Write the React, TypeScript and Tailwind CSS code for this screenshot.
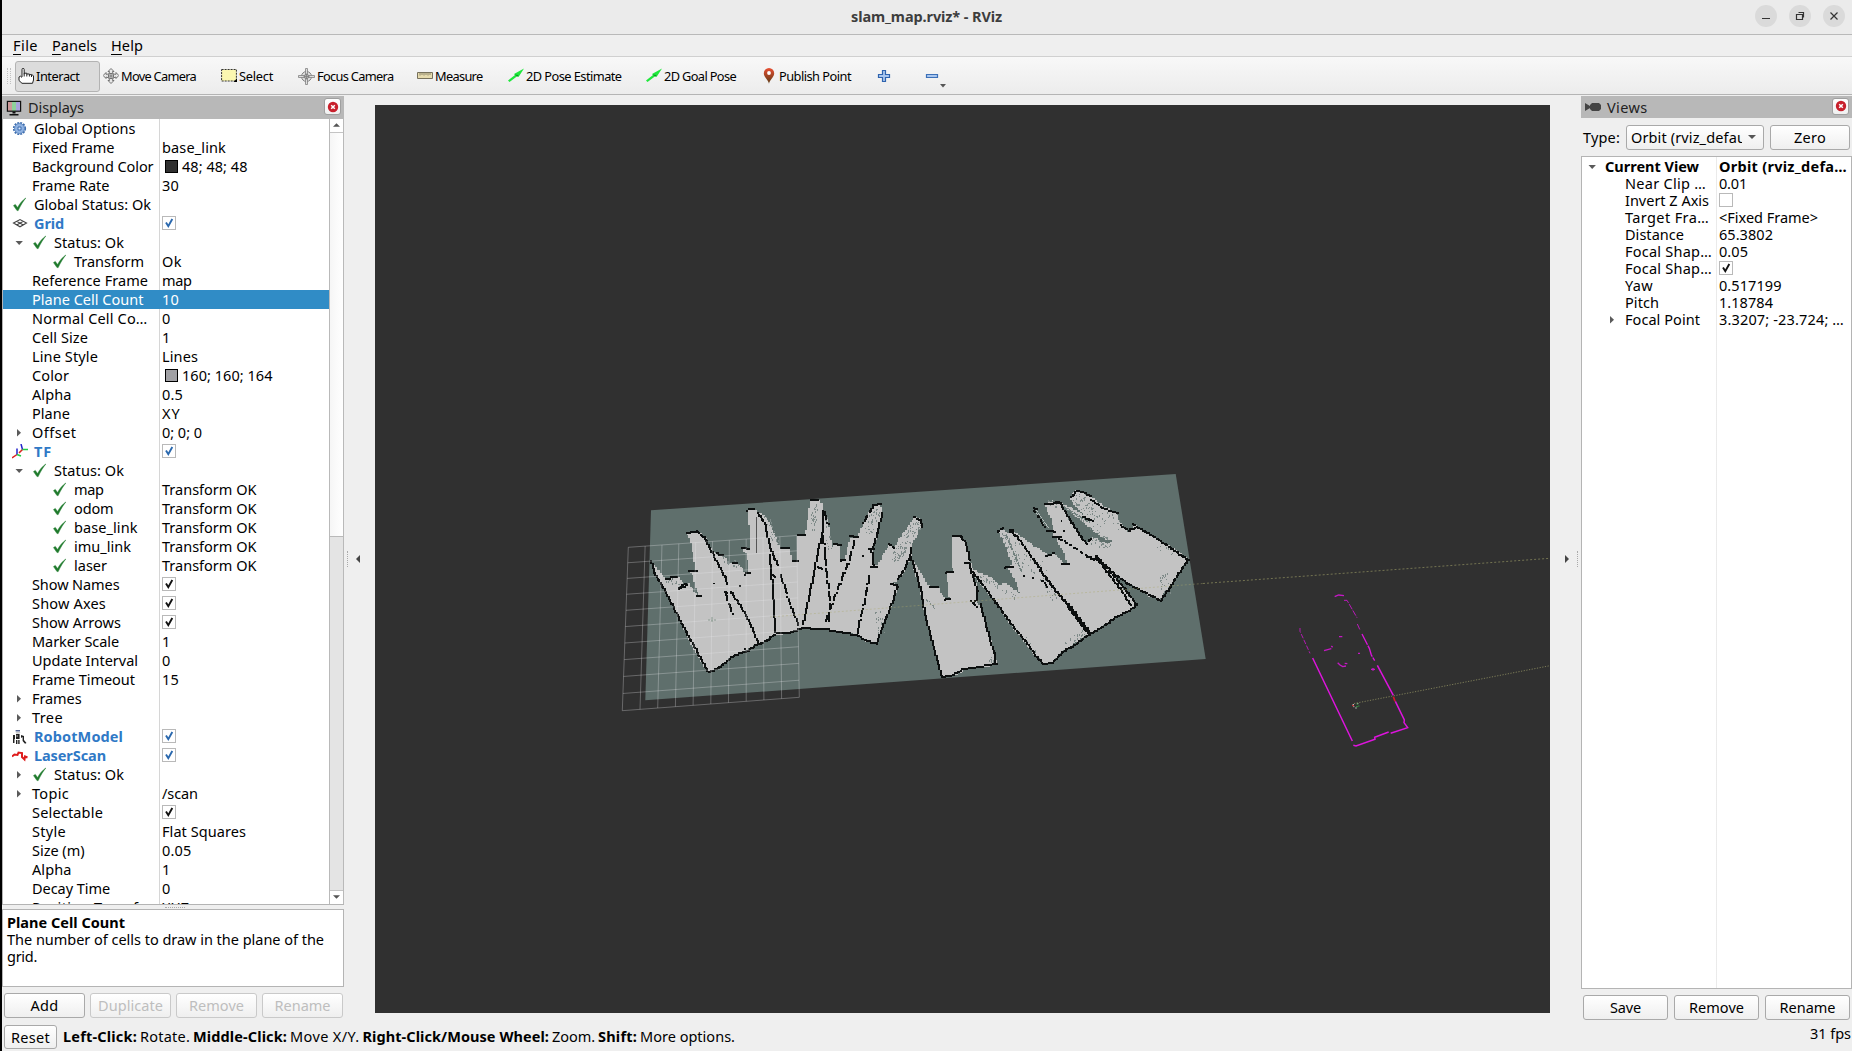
import { useLayoutEffect, useRef, useState } from "react";
import type { ReactNode } from "react";
import { clsx } from "clsx";

/* ---------- text with a fixed advance width ---------- */

function Fit({ w, className, children }: { w: number; className?: string; children: ReactNode }) {
  const ref = useRef<HTMLSpanElement>(null);
  const [spacing, setSpacing] = useState<number | null>(null);
  useLayoutEffect(() => {
    const el = ref.current;
    if (!el || spacing !== null) return;
    const n = (el.textContent ?? "").length;
    setSpacing((w + 1 - el.getBoundingClientRect().width) / Math.max(n, 1));
  }, [w, spacing]);
  return (
    <span ref={ref} className={clsx("inline-block shrink-0 whitespace-pre", className)} style={{ letterSpacing: spacing ?? 0 }}>
      {children}
    </span>
  );
}

/* ---------- small icons ---------- */

const Tick = () => (
  <svg viewBox="0 0 16 16" className="size-4 shrink-0">
    <path d="M1.5 8.6 3.3 7.4 5.6 10.6C7.6 6.6 10.4 3.4 13.8 1 11 4.6 8.4 8.6 6.2 13.6L5 13.6Z" fill="#1f7a2c" stroke="#1f7a2c" strokeWidth=".5" />
  </svg>
);
const ArrowDown = () => (
  <svg viewBox="0 0 16 16" className="size-4 shrink-0"><path d="M3.5 6h7.4L7.2 10z" fill="#5a5a5a" /></svg>
);
const ArrowRight = () => (
  <svg viewBox="0 0 16 16" className="size-4 shrink-0"><path d="M5 4v7.4L9 7.7z" fill="#5a5a5a" /></svg>
);
const GearIcon = () => (
  <svg viewBox="0 0 16 16" className="size-4 shrink-0">
    <circle cx="7.5" cy="7.5" r="5.8" fill="none" stroke="#3f6fb0" strokeWidth="1.6" strokeDasharray="2 1.04" />
    <circle cx="7.5" cy="7.5" r="5" fill="#8fb2e2" stroke="#4876b4" strokeWidth=".8" />
    <path d="M6 6h3v3H6z" fill="#b9d0f0" stroke="#3f6fb0" strokeWidth="1" />
    <circle cx="7.5" cy="7.5" r=".8" fill="#dbe8fa" />
  </svg>
);
const GridIcon = () => (
  <svg viewBox="0 0 16 16" className="size-4 shrink-0" fill="none" stroke="#444" strokeWidth="1.1">
    <path d="M1.5 7 8 3.6 14.5 7 8 10.8ZM4.7 5.3 11.3 9M11.3 5.3 4.7 9" />
  </svg>
);
const TfIcon = () => (
  <svg viewBox="0 0 16 16" className="size-4 shrink-0" fill="none" strokeWidth="1.5">
    <path d="M7 8.600 10.500 5.600" stroke="#e6c832" strokeWidth="1" />
    <path d="M5 10.500 0 14M10.500 5.500 7 9" stroke="#d22" />
    <path d="M5 10.500V4.500M10.500 5.500 9 0" stroke="#22c" />
    <path d="M5 10.500 9 12M10.500 5.500H16" stroke="#2c4" />
  </svg>
);
const RobotIcon = () => (
  <svg viewBox="0 0 16 16" className="size-4 shrink-0">
    <path d="M3.600 1.200h4.400v1.200H3.600z" fill="#2b3f78" /><path d="M3.500 3.200h5l-1 1.400h-3z" fill="#bbb" />
    <path d="M1 6h2v8H1zM4 5h3.600v5H4zM4 11h1.400v4H4zM6.200 11h1.400v4H6.200zM9 6l3 1v4l2.500 3-1.500.8L10.600 12V8L9 9z" fill="#222" />
    <path d="M4.600 6h1v2h-1zM2 10h1v4H2z" fill="#999" />
  </svg>
);
const LaserIcon = () => (
  <svg viewBox="0 0 16 16" className="size-4 shrink-0" fill="none" stroke="#de1b1b" strokeWidth="2">
    <path d="M0 8.500 2.500 6.500 5.500 7 6.500 4.500 10 5V9L12.500 11.500 13 8.500 15.500 9.500" />
  </svg>
);

type IconName = "gear" | "tick" | "grid" | "tf" | "robot" | "laser";
const icons: Record<IconName, () => ReactNode> = { gear: GearIcon, tick: Tick, grid: GridIcon, tf: TfIcon, robot: RobotIcon, laser: LaserIcon };

function Check({ on, blue }: { on: boolean; blue?: boolean }) {
  return (
    <span className="mb-px flex size-[14px] shrink-0 items-center justify-center border border-[#b9b9b9] bg-white">
      {on && (
        <svg viewBox="0 0 12 12" className="size-3" fill="none" stroke={blue ? "#2a68ae" : "#111"} strokeWidth="1.9">
          <path d="M3 5.500 5.300 9.200 9.300 2" />
        </svg>
      )}
    </span>
  );
}

/* ---------- displays tree ---------- */

type Row = {
  t: string; w: number; v?: string; vw?: number;
  level?: 0 | 1 | 2; icon?: IconName; arrow?: "d" | "r"; head?: boolean;
  check?: "blue" | "black"; color?: string;
};

const displayRows: Row[] = [
  { t: "Global Options", w: 100.5, level: 0, icon: "gear" },
  { t: "Fixed Frame", w: 81.5, v: "base_link", vw: 63 },
  { t: "Background Color", w: 120.5, v: "48; 48; 48", vw: 64.5, color: "bg-[#303030]" },
  { t: "Frame Rate", w: 76.5, v: "30", vw: 16 },
  { t: "Global Status: Ok", w: 116, level: 0, icon: "tick" },
  { t: "Grid", w: 29, level: 0, icon: "grid", head: true, check: "blue" },
  { t: "Status: Ok", w: 69, level: 1, arrow: "d" },
  { t: "Transform", w: 69, level: 2, v: "Ok", vw: 19 },
  { t: "Reference Frame", w: 115, v: "map", vw: 28.5 },
  { t: "Plane Cell Count", w: 110.5, v: "10", vw: 16 },
  { t: "Normal Cell Co…", w: 114.5, v: "0", vw: 8 },
  { t: "Cell Size", w: 55, v: "1", vw: 8 },
  { t: "Line Style", w: 65, v: "Lines", vw: 35 },
  { t: "Color", w: 36, v: "160; 160; 164", vw: 89.5, color: "bg-[#a0a0a4]" },
  { t: "Alpha", w: 38.5, v: "0.5", vw: 20 },
  { t: "Plane", w: 37, v: "XY", vw: 17.5 },
  { t: "Offset", w: 43.5, arrow: "r", v: "0; 0; 0", vw: 39 },
  { t: "TF", w: 17, level: 0, icon: "tf", head: true, check: "blue" },
  { t: "Status: Ok", w: 69, level: 1, arrow: "d" },
  { t: "map", w: 28.5, level: 2, v: "Transform OK", vw: 93.5 },
  { t: "odom", w: 38.5, level: 2, v: "Transform OK", vw: 93.5 },
  { t: "base_link", w: 62.5, level: 2, v: "Transform OK", vw: 93.5 },
  { t: "imu_link", w: 56, level: 2, v: "Transform OK", vw: 93.5 },
  { t: "laser", w: 32, level: 2, v: "Transform OK", vw: 93.5 },
  { t: "Show Names", w: 86.5, check: "black" },
  { t: "Show Axes", w: 73, check: "black" },
  { t: "Show Arrows", w: 88, check: "black" },
  { t: "Marker Scale", w: 86, v: "1", vw: 8 },
  { t: "Update Interval", w: 105, v: "0", vw: 8 },
  { t: "Frame Timeout", w: 102, v: "15", vw: 16 },
  { t: "Frames", w: 48.5, arrow: "r" },
  { t: "Tree", w: 30, arrow: "r" },
  { t: "RobotModel", w: 88, level: 0, icon: "robot", head: true, check: "blue" },
  { t: "LaserScan", w: 71, level: 0, icon: "laser", head: true, check: "blue" },
  { t: "Status: Ok", w: 69, level: 1, arrow: "r" },
  { t: "Topic", w: 36, arrow: "r", v: "/scan", vw: 35 },
  { t: "Selectable", w: 70, check: "black" },
  { t: "Style", w: 33, v: "Flat Squares", vw: 83 },
  { t: "Size (m)", w: 51.5, v: "0.05", vw: 28.5 },
  { t: "Alpha", w: 38.5, v: "1", vw: 8 },
  { t: "Decay Time", w: 77, v: "0", vw: 8 },
  { t: "Position Transf…", w: 117, v: "XYZ", vw: 27 },
];

function DisplayRow({ r, selected }: { r: Row; selected: boolean }) {
  const Icon = r.icon ? icons[r.icon] : null;
  return (
    <div className={clsx("flex h-[19px] shrink-0 items-center", selected && "bg-[#308cc6] text-white")}>
      <div className={clsx("flex h-full w-[157px] shrink-0 items-center border-r pl-[9px]", selected ? "border-[#308cc6]" : "border-[#d6d6d6]")}>
        <span className="flex w-4 shrink-0">
          {Icon && <Icon />}
          {r.arrow === "d" && <ArrowDown />}
          {r.arrow === "r" && <ArrowRight />}
        </span>
        {(r.level === 1 || r.level === 2) && (
          <span className={clsx("flex shrink-0", r.level === 1 ? "ml-1" : "ml-6")}><Tick /></span>
        )}
        <Fit w={r.w} className={clsx(r.level === undefined ? "ml-1" : "ml-1.5", r.head && "font-bold text-[#3079c6]")}>{r.t}</Fit>
      </div>
      <div className="flex items-center pl-[2px]">
        {r.color && <span className={clsx("mr-1 ml-[3px] size-[13px] border border-black", r.color)} />}
        {r.check && <Check on blue={r.check === "blue"} />}
        {r.v && <Fit w={r.vw ?? 0}>{r.v}</Fit>}
      </div>
    </div>
  );
}

/* ---------- shared chrome ---------- */

function Button({ label, w, className, disabled }: { label: string; w: number; className: string; disabled?: boolean }) {
  return (
    <button className={clsx("flex items-center justify-center rounded-[3px] border bg-linear-to-b from-white to-[#efefef]", disabled ? "border-[#c9c9c9] text-[#bebebe]" : "border-[#a9a9a9] text-black", className)}>
      <Fit w={w}>{label}</Fit>
    </button>
  );
}

const CloseButton = () => (
  <span className="mb-0.5 flex size-[17px] items-center justify-center rounded-[3px] border border-[#a0a0a0] bg-linear-to-b from-white to-[#f0f0f0]">
    <svg viewBox="0 0 12 12" className="size-3">
      <circle cx="6" cy="6" r="5.200" fill="#c8202c" />
      <path d="M4.200 4.200l3.600 3.600M7.800 4.200l-3.600 3.600" stroke="#fff" strokeWidth="1.500" />
    </svg>
  </span>
);

/* ---------- toolbar icons ---------- */

const HandIcon = () => (
  <svg viewBox="0 0 16 16" className="size-4" fill="#fff" stroke="#222" strokeWidth="1" strokeLinejoin="round">
    <path d="M4 9V1.500a1 1 0 0 1 2.200 0V6.500V5.200h2.600V6h2.600v.6h2.400l1.700 1.200V12l-1 3.300H4L1 12.500V9l1.500-.8L4 9.500M6.200 6.500v2M8.800 6v2.500M11.400 6.500v2M13.500 7v2" />
  </svg>
);
const MoveIcon = () => (
  <svg viewBox="0 0 16 16" className="size-4" fill="#e8e8e8" stroke="#666" strokeWidth=".9">
    <path d="M8 .5 11 3.500H9.500L10 6 13 6.300V4.500L15.800 7.500 13 10.500V9L10 10 9.500 12.500H11L8 15.500 5 12.500H6.500L6 10 3 9V10.500L.2 7.500 3 4.500V6.300L6 6 6.500 3.500H5Z" />
    <circle cx="8" cy="8" r="2.700" />
    <path d="M8 5.300v5.400M5.300 8h5.400" />
  </svg>
);
const SelectIcon = () => (
  <svg viewBox="0 0 16 16" className="size-4">
    <path d="M.6 1.500h14.800v11.500H.6z" fill="#fbf7b0" stroke="#333" strokeWidth="1" strokeDasharray="2 1" />
    <path d="M12.500 14l3.500-3.500v3.500z" fill="#000" />
  </svg>
);
const FocusIcon = () => (
  <svg viewBox="0 0 17 17" className="size-[17px]" fill="none" stroke="#808080" strokeWidth="1">
    <circle cx="8.500" cy="8.500" r="5" fill="#e2e2e2" /><circle cx="8.500" cy="8.500" r="2.200" fill="#bbb" />
    <path d="M7.500 .5h2v5.500h-2zM7.500 11h2v5.500h-2zM.5 7.500h5.500v2H.5zM11 7.500h5.500v2H11z" fill="#ddd" strokeWidth=".8" />
    <path d="M8.500 6v5M6 8.500h5" strokeWidth=".8" />
  </svg>
);
const RulerIcon = () => (
  <svg viewBox="0 0 16 16" className="size-4">
    <path d="M.5 4.500h15v6H.5z" fill="#e6dbae" stroke="#77715c" />
    <path d="M3 5v2.500M5 5v2M7 5v2.500M9 5v2M11 5v2.500M13 5v2" stroke="#77715c" strokeWidth=".8" />
  </svg>
);
const PoseIcon = () => (
  <svg viewBox="0 0 16 16" className="size-4">
    <path d="M0 12.500 7 7 6 6 16 .5 10.500 9 9.500 8 1.500 14z" fill="#1fe83c" /><path d="M6.500 6.500 9.600 8.800 10.500 7z" fill="#0a9a20" />
  </svg>
);
const PinIcon = () => (
  <svg viewBox="0 0 16 16" className="size-4">
    <defs><linearGradient id="pin" x1="0" y1="0" x2="0" y2="1"><stop offset="0" stopColor="#e84f33" /><stop offset="1" stopColor="#5a3a14" /></linearGradient></defs>
    <path d="M8 15.800C7.300 11.500 2.800 9.500 2.800 5.300a5.200 5.200 0 0 1 10.400 0C13.200 9.500 8.700 11.500 8 15.800z" fill="url(#pin)" /><circle cx="8" cy="5" r="1.900" fill="#fff" />
  </svg>
);
const PlusIcon = () => (
  <svg viewBox="0 0 16 16" className="size-4"><path d="M6.500 2.500h3v4h4v3h-4v4h-3v-4h-4v-3h4z" fill="#a9c6ee" stroke="#2e63ae" strokeWidth="1.200" /></svg>
);
const MinusIcon = () => (
  <svg viewBox="0 0 16 16" className="size-4"><path d="M2.500 6.500h11v3h-11z" fill="#a9c6ee" stroke="#3c70b8" strokeWidth="1.200" /></svg>
);

const tools = [
  { label: "Interact", w: 42.5, icon: <HandIcon />, box: "w-[85px] rounded-[3px] border border-[#b3b3b3] bg-[#dcdcdc] pl-0.5" },
  { label: "Move Camera", w: 74, icon: <MoveIcon />, box: "w-[118px] pl-[3px]" },
  { label: "Select", w: 33, icon: <SelectIcon />, box: "w-[77px] pl-[3px]" },
  { label: "Focus Camera", w: 75.5, icon: <FocusIcon />, box: "w-[119px] pl-[3px]" },
  { label: "Measure", w: 46.5, icon: <RulerIcon />, box: "w-[91px] pl-[3px]" },
  { label: "2D Pose Estimate", w: 94.5, icon: <PoseIcon />, box: "w-[138px] pl-[3px]" },
  { label: "2D Goal Pose", w: 71, icon: <PoseIcon />, box: "w-[115px] pl-[3px]" },
  { label: "Publish Point", w: 71, icon: <PinIcon />, box: "w-[115px] pl-[3px]" },
];

/* ---------- 3D scene ---------- */

type P = [number, number];
const CELL = 5;
const snap = (n: number) => Math.round(n / CELL) * CELL;
const pts = (s: string): P[] => s.split(" ").map((p) => p.split(",").map(Number) as P);

/* Outline that walks from point to point in whole map cells. */
function stair(s: string) {
  const a = pts(s);
  let d = `M${snap(a[0][0])} ${snap(a[0][1])}`;
  for (let i = 0; i < a.length; i++) {
    const [x0, y0] = a[i];
    const [x1, y1] = a[(i + 1) % a.length];
    const n = Math.max(1, Math.ceil(Math.hypot(x1 - x0, y1 - y0) / CELL));
    for (let k = 1; k <= n; k++) d += `H${snap(x0 + ((x1 - x0) * k) / n)}V${snap(y0 + ((y1 - y0) * k) / n)}`;
  }
  return d + "Z";
}

/* Row of occupied cells along a polyline. */
function cells(s: string, size = 6, skip = 0) {
  const a = pts(s);
  let d = "";
  let q = 0;
  for (let i = 0; i + 1 < a.length; i++) {
    const [x0, y0] = a[i];
    const [x1, y1] = a[i + 1];
    const n = Math.max(1, Math.ceil(Math.hypot(x1 - x0, y1 - y0) / 4));
    for (let k = 0; k <= n; k++) {
      q++;
      if (skip && q % skip < 2) continue;
      const x = Math.round((x0 + ((x1 - x0) * k) / n) / 4) * 4;
      const y = Math.round((y0 + ((y1 - y0) * k) / n) / 4) * 4;
      d += `M${x - size / 2} ${y - size / 2}h${size}v${size}h${-size}z`;
    }
  }
  return d;
}

/* Unknown cells scattered around a segment. */
function speckle(x0: number, y0: number, x1: number, y1: number, spread: number, count: number, seed: number) {
  let s = seed * 7919;
  const rnd = () => ((s = (s * 16807) % 2147483647) / 2147483647);
  const len = Math.hypot(x1 - x0, y1 - y0);
  let d = "";
  for (let i = 0; i < count; i++) {
    const t = rnd();
    const o = (rnd() - 0.5) * spread;
    const x = Math.round((x0 + (x1 - x0) * t - ((y1 - y0) / len) * o) / 3) * 3;
    const y = Math.round((y0 + (y1 - y0) * t + ((x1 - x0) / len) * o) / 3) * 3;
    d += `M${x} ${y}h3v${rnd() > 0.6 ? 6 : 3}h-3z`;
  }
  return d;
}

const leftFree = "122,305 148,335 165,355 185,358 205,352 222,375 235,372 250,390 262,408 268,405 258,385 248,345 238,335 258,330 250,290 243,250 236,225 232,220 258,213 285,232 305,275 325,285 345,292 355,312 380,308 395,325 405,340 415,338 412,290 400,265 420,265 417,180 412,150 432,146 445,160 465,165 485,205 500,240 512,265 535,262 545,300 562,300 562,225 585,225 592,180 600,120 622,118 638,135 640,165 655,180 660,220 665,260 672,255 690,252 688,300 705,300 712,260 720,235 742,228 760,190 785,138 810,133 818,160 808,185 800,235 790,265 785,315 800,318 815,290 835,255 852,262 880,215 912,170 930,178 938,195 925,220 905,260 903,290 885,335 870,355 850,370 865,380 850,420 820,500 800,550 775,545 730,522 655,510 575,505 530,522 495,525 470,545 440,555 400,575 365,590 330,620 298,637 270,600 240,545 210,480 180,420 155,370 135,335";
const leftWalls = [
  "125,305 132,335 155,375 185,430 215,490 245,545 275,600 295,635 320,628 350,605 370,588 415,572 440,555 470,543 495,522 535,520 575,505 650,508 700,518 740,525 770,542 800,550 803,540",
  "862,378 850,420 830,470 805,535", "905,265 900,290 880,335 865,355", "845,372 862,378",
  "258,213 285,235 310,285 345,350 352,372", "362,395 400,450 425,500 445,550", "445,160 465,190 475,240 483,270 503,315",
  "478,285 485,340 490,420 497,515", "638,150 640,210 625,270 612,340 595,420 580,490", "817,160 807,200 797,240 785,270 790,315",
  "232,220 258,214", "412,150 432,148", "602,120 622,120", "788,135 810,133", "912,172 932,180 937,200", "235,332 258,330",
  "397,262 415,268", "512,263 535,265", "547,302 562,302", "562,225 585,225", "672,252 690,256", "690,302 703,300", "720,228 742,232",
  "168,355 200,352", "206,386 232,376", "208,382 226,372", "258,408 270,408", "785,320 800,320", "835,250 852,262", "366,308 380,308",
  "404,342 420,338", "318,280 340,284", "622,318 634,326", "482,340 496,350", "776,268 792,268", "343,396 352,400",
];
const leftBroken = [
  "345,395 368,460", "510,340 540,430 565,495", "640,225 645,290 655,380 660,430 655,490", "735,240 715,310 690,370 665,435 645,490",
  "778,345 765,420 750,480 742,520", "640,150 655,190", "758,190 788,140",
];
const rightFree = [
  "62,290 85,325 105,365 118,380 145,378 150,400 172,420 178,415 175,375 168,338 188,335 185,280 187,230 205,228 225,240 235,270 242,310 250,345 262,390 262,430 275,440 290,500 305,550 318,605 318,615 270,622 230,628 200,645 155,652 145,610 125,540 105,460 90,390 75,340",
  "245,325 270,340 300,350 325,375 345,368 370,390 390,400 380,370 360,330 348,320 368,315 355,280 340,240 325,212 338,205 350,220 372,215 400,235 440,265 475,285 490,280 510,300 530,315 525,285 505,245 490,225 492,212 485,180 470,145 465,130 485,122 510,130 530,165 545,195 570,225 590,250 605,275 640,310 680,360 710,400 738,435 720,455 680,470 645,495 610,520 590,525 555,550 520,575 490,605 465,613 430,580 400,540 360,490 320,430 280,380 250,345",
  "540,110 555,90 600,108 640,140 680,160 690,190 710,215 730,205 730,195 800,235 850,265 895,300 870,335 850,370 825,400 812,420 780,410 720,370 670,345 640,315 615,285 595,265 590,245 605,232 650,250 665,242 630,210 600,180 570,150 550,130",
  "515,132 540,142 600,180 668,240 650,242 590,195",
];
const rightWalls = [
  "62,290 80,345 95,400 105,460 125,540 145,610 155,652 190,645 220,628 270,620 318,612 315,580", "240,315 248,350 262,390 258,420 250,430",
  "270,430 285,480 300,540 315,585", "187,228 210,228 228,248 235,280 238,300", "118,380 145,378", "168,338 188,337", "165,418 178,415",
  "222,308 240,310", "248,335 290,390 330,445 370,500 410,548 440,590 462,613 490,605 520,575 555,555 600,522 640,500 680,470 720,452 740,435",
  "510,130 540,180 580,240 590,250", "465,132 510,128", "470,210 495,215", "515,312 535,312", "345,322 368,318", "468,288 490,280",
  "322,215 338,205", "430,145 440,147", "595,243 605,235", "545,112 562,90 605,108", "605,120 640,145 682,160", "690,195 715,212 735,205",
  "728,192 800,235 895,300 870,335 845,375 812,422 780,405 720,375 670,340 625,295", "245,425 258,438", "486,232 512,232", "592,290 618,298",
  "362,212 385,235 410,270 450,325", "580,172 608,182", "645,328 690,385 722,435", "655,330 700,380 738,432",
];
const rightBroken = ["505,235 540,255 610,300", "455,360 472,380", "432,148 450,180 470,210"];

const specks = [
  speckle(612, 130, 606, 210, 22, 28, 11), speckle(798, 145, 775, 220, 28, 40, 22), speckle(925, 185, 850, 300, 30, 90, 33),
  speckle(470, 165, 500, 255, 20, 26, 44), speckle(330, 290, 385, 315, 22, 20, 55), speckle(805, 450, 815, 520, 26, 20, 66),
  speckle(645, 170, 660, 270, 14, 14, 77), speckle(170, 358, 225, 380, 12, 12, 88),
];
const specksRight = [
  speckle(555, 105, 640, 190, 32, 60, 12), speckle(640, 150, 690, 200, 24, 12, 13), speckle(335, 215, 395, 325, 24, 36, 14),
  speckle(265, 345, 375, 410, 16, 36, 15), speckle(595, 240, 660, 258, 20, 24, 16), speckle(815, 340, 830, 400, 30, 28, 17),
  speckle(520, 550, 580, 515, 18, 20, 18), speckle(470, 125, 500, 135, 14, 10, 19), speckle(525, 140, 650, 235, 10, 30, 20),
  speckle(450, 350, 510, 440, 30, 16, 21), speckle(300, 595, 312, 608, 12, 8, 23), speckle(400, 530, 440, 570, 20, 8, 24),
  speckle(780, 250, 860, 280, 24, 8, 25), speckle(370, 240, 480, 370, 50, 22, 26), speckle(105, 410, 135, 445, 4, 8, 27),
];

function gridLines() {
  const tl: P = [628.3, 547.3], tr: P = [796.7, 535.5], bl: P = [622.3, 710.7], br: P = [799.3, 697.3];
  const mix = (a: P, b: P, t: number): P => [a[0] + (b[0] - a[0]) * t, a[1] + (b[1] - a[1]) * t];
  let d = "";
  for (let i = 0; i <= 10; i++) {
    const u = i / 10;
    const v = u * (0.94 + 0.06 * u);
    d += `M${mix(tl, tr, u).join(" ")}L${mix(bl, br, u).join(" ")}`;
    d += `M${mix(tl, bl, v).join(" ")}L${mix(tr, br, v).join(" ")}`;
  }
  return d;
}

function Scene() {
  return (
    <svg viewBox="375 105 1175 908" className="block h-[908px] w-[1175px] bg-[#303030]">
      <path d="M651 510.300 1175.700 474 1205.700 659 645.300 700.300Z" fill="#5f6f6c" />
      <g transform="translate(610 460) scale(.33333)" shapeRendering="crispEdges">
        <path d={stair(leftFree)} fill="#c3c3c3" />
        <path d={specks.join("")} fill="#7f8b89" />
        <path d="M440 170V280" stroke="#555" strokeWidth="3" />
        <path d={leftWalls.map((s) => cells(s)).join("")} fill="#0c0f0f" />
        <path d={leftBroken.map((s) => cells(s, 6, 9)).join("")} fill="#0c0f0f" />
        <path d="M308 368h6v5h-6zM387 375h6v5h-6zM402 565h6v5h-6zM756 285h5v6h-5zM366 458h6v6h-6z" fill="#0c0f0f" />
      </g>
      <g transform="translate(890 460) scale(.33333)" shapeRendering="crispEdges">
        <path d={rightFree.map((s) => stair(s)).join("")} fill="#c3c3c3" />
        <path d="M434 150 470 208M440 150 476 205" stroke="#b8bebd" strokeWidth="3" strokeDasharray="8 3" />
        <path d={specksRight.join("")} fill="#7f8b89" />
        <path d="M348 225 395 335M520 140 600 188" stroke="#71807d" strokeWidth="5" strokeDasharray="14 4" />
        <path d={rightWalls.map((s) => cells(s)).join("")} fill="#0c0f0f" />
        <path d={cells("450,330 500,395 535,436", 7)} fill="#0c0f0f" />
        <path d={cells("535,436 595,516", 11)} fill="#0c0f0f" />
        <path d={cells("618,288 645,325", 8)} fill="#0c0f0f" />
        <path d={rightBroken.map((s) => cells(s, 6, 5)).join("")} fill="#0c0f0f" />
        <path d="M358 208h14v12h-14zM495 122h14v10h-14zM512 180h5v5h-5zM520 210h5v5h-5zM426 350h6v6h-6zM400 346h5v6h-5z" fill="#0c0f0f" />
      </g>
      <path d={gridLines()} fill="none" stroke="#e8e8ea" strokeOpacity=".3" strokeWidth="1" />
      <path d="M708 620h8M712 617v5" stroke="#8a9a90" strokeWidth="1" strokeDasharray="2 1" />
      <path d="M770 617 1203 583.500" stroke="#a9a76c" strokeOpacity=".4" strokeWidth="1" strokeDasharray="2 2" />
      <path d="M1203 583.500 1550 558.300" stroke="#85855a" strokeOpacity=".8" strokeWidth="1" strokeDasharray="2 2" />
      <path d="M1354 703.500 1550 665.700" stroke="#85855c" strokeOpacity=".9" strokeWidth="1" strokeDasharray="1.200 1.500" />
      <g transform="translate(1270 540) scale(.33333)" fill="none" stroke="#dd14dd">
        <path d="M128 354 247 603M322 376 370 466" strokeWidth="4.500" />
        <path d="M376 484 403 540 402 548 413 563 362 580M250 616 258 618 315 598 314 592 356 576" strokeWidth="4.500" />
        <path d="M276 282 298 325 304 345 314 362" strokeWidth="4" strokeDasharray="36 3" />
        <path d="M90 264v10l30 66" strokeWidth="3" strokeDasharray="14 5" opacity=".75" />
        <path d="M222 181h9l30 52M262 252 270 270" strokeWidth="3" strokeDasharray="18 4" opacity=".8" />
        <path d="M194 170 206 165 222 167M162 332 184 326M184 318l4 4M207 290h10M264 340h6M203 368 210 375 218 380 228 378M224 370l8 1M303 388h12M309 384v8" strokeWidth="4" opacity=".85" />
        <path d="M370 470 375 484" stroke="#d81a2a" strokeWidth="5" />
        <path d="M248 494h4M256 504h4M250 500h3M262 491h3" stroke="#ddd" strokeWidth="3" />
        <path d="M260 492h3M259 500h4M265 498h3" stroke="#35c048" strokeWidth="3" />
        <path d="M246 497h6" stroke="#d33" strokeWidth="3" />
      </g>
    </svg>
  );
}

/* ---------- views panel ---------- */

const viewRows = [
  { t: "Near Clip …", w: 80, v: "0.01", vw: 27 },
  { t: "Invert Z Axis", w: 83, box: false },
  { t: "Target Fra…", w: 83, v: "<Fixed Frame>", vw: 98 },
  { t: "Distance", w: 58, v: "65.3802", vw: 53 },
  { t: "Focal Shap…", w: 86, v: "0.05", vw: 28 },
  { t: "Focal Shap…", w: 86, box: true },
  { t: "Yaw", w: 27, v: "0.517199", vw: 61.5 },
  { t: "Pitch", w: 33, v: "1.18784", vw: 53 },
  { t: "Focal Point", w: 74, v: "3.3207; -23.724; …", vw: 124, arrow: true },
];

const menus = [
  { t: "File", w: 24, m: "ml-px" },
  { t: "Panels", w: 44, m: "ml-[14px]" },
  { t: "Help", w: 31, m: "ml-[14px]" },
];

const hints = [
  { b: "Left-Click:", bw: 73, t: "Rotate.", tw: 49 },
  { b: "Middle-Click:", bw: 93, t: "Move X/Y.", tw: 68.5 },
  { b: "Right-Click/Mouse Wheel:", bw: 185.5, t: "Zoom.", tw: 42 },
  { b: "Shift:", bw: 38, t: "More options.", tw: 94 },
];

export default function App() {
  return (
    <div className="flex h-[1051px] w-[1852px] flex-col overflow-hidden border-l-2 border-black bg-[#efefef] font-['Noto_Sans',sans-serif] text-[14.5px] leading-[19px] text-black">
      <header className="flex h-[35px] shrink-0 items-center border-b border-[#b9b9b9] bg-[#ebebeb]">
        <div className="w-[1753px] pb-0.5 pl-[849px] font-bold text-[#3d3d3d]">
          <Fit w={150}>slam_map.rviz* - RViz</Fit>
        </div>
        <div className="flex gap-3 pb-0.5">
          {["M7 13.500h8", "M7.500 9.500h6v5h-6zM9.500 7.500h5v5", "M7.500 7.500l7 7M14.500 7.500l-7 7"].map((d) => (
            <svg key={d} viewBox="0 0 22 22" className="size-[22px] rounded-full bg-[#dadada]" fill="none" stroke="#333" strokeWidth="1.200"><path d={d} /></svg>
          ))}
        </div>
      </header>

      <nav className="flex h-[22px] shrink-0 items-center border-b border-[#d0d0d0] pl-[10px]">
        {menus.map((m) => (
          <Fit key={m.t} w={m.w} className={m.m}>
            <span className="underline decoration-1 underline-offset-[3px]">{m.t[0]}</span>{m.t.slice(1)}
          </Fit>
        ))}
      </nav>

      <div className="flex h-[38px] shrink-0 items-center border-b border-[#b4b4b4] bg-linear-to-b from-[#f8f8f8] to-[#ececec] pt-px text-[12.8px]">
        <span className="mx-1 ml-[5px] h-4 w-1 border-x border-dotted border-[#c0c0c0]" />
        {tools.map((t) => (
          <div key={t.label} className={clsx("flex h-[31px] items-center gap-0.5", t.box)}>
            <span className="shrink-0">{t.icon}</span>
            <Fit w={t.w}>{t.label}</Fit>
          </div>
        ))}
        <div className="flex w-12 pl-[3px]"><PlusIcon /></div>
        <div className="flex pl-[3px]"><MinusIcon /></div>
        <svg viewBox="0 0 6 4" className="mt-5 h-1 w-1.5"><path d="M0 0h6L3 3.500z" fill="#555" /></svg>
      </div>

      <div className="flex h-[924px] shrink-0 pt-px">
        <aside className="flex w-[342px] shrink-0 flex-col">
          <div className="flex h-[23px] shrink-0 items-center justify-between bg-[#b8b8b8] pr-[3px] pl-1">
            <div className="flex items-center gap-1.5">
              <svg viewBox="0 0 16 16" className="size-4">
                <path d="M.8.800h14.400v11H.8z" fill="#111" />
                <path d="M2 2h4v8.600H2z" fill="#c99" /><path d="M6 2h4v8.600H6z" fill="#8ed19a" /><path d="M10 2h4v8.600h-4z" fill="#a9a2dc" />
                <path d="M6.500 11.500h3v2h-3zM3.500 14h9v1.500h-9z" fill="#111" />
              </svg>
              <Fit w={55} className="text-[#222]">Displays</Fit>
            </div>
            <CloseButton />
          </div>
          <div className="flex h-[786px] shrink-0 border-b border-l border-[#b4b4b4] bg-white">
            <div className="flex w-[326px] flex-col overflow-hidden">
              {displayRows.map((r, i) => <DisplayRow key={i} r={r} selected={i === 9} />)}
            </div>
            <div className="flex w-[15px] flex-col border-x border-[#b9b9b9] bg-[#e4e4e4]">
              <div className="flex h-[14px] items-center justify-center border-b border-[#c4c4c4] bg-white">
                <svg viewBox="0 0 8 4" className="mr-px mb-0.5 h-1 w-[7px]"><path d="M0 4h8L4 0z" fill="#555" /></svg>
              </div>
              <div className="h-[404px] border-b border-[#b9b9b9] bg-linear-to-r from-[#f6f6f6] to-white" />
              <div className="mt-auto flex h-[14px] items-center justify-center border-t border-[#c4c4c4] bg-white">
                <svg viewBox="0 0 8 4" className="mr-px mb-0.5 h-1 w-[7px]"><path d="M0 0h8L4 4z" fill="#555" /></svg>
              </div>
            </div>
          </div>
          <div className="flex h-1 shrink-0 items-center pl-[163px]"><span className="w-5 border-t border-dotted border-[#aaa]" /></div>
          <div className="h-[78px] shrink-0 border border-[#b4b4b4] bg-white pt-1 pl-1 leading-[17px]">
            <div className="font-bold"><Fit w={117}>Plane Cell Count</Fit></div>
            <div><Fit w={316}>The number of cells to draw in the plane of the</Fit></div>
            <div><Fit w={29}>grid.</Fit></div>
          </div>
          <div className="mt-1.5 flex gap-[5px] pl-0.5">
            <Button label="Add" w={27} className="h-[25px] w-[81px]" />
            <Button label="Duplicate" w={64} className="h-[25px] w-[81px]" disabled />
            <Button label="Remove" w={54} className="h-[25px] w-[81px]" disabled />
            <Button label="Rename" w={55} className="h-[25px] w-[81px]" disabled />
          </div>
        </aside>

        <div className="flex w-[31px] shrink-0 items-center pt-[2px] pl-[3px]">
          <span className="h-4 border-l border-dotted border-[#aaa]" />
          <svg viewBox="0 0 4 8" className="ml-2 h-2 w-1"><path d="M4 0v8L0 4z" fill="#444" /></svg>
        </div>
        <main className="w-[1175px] shrink-0 pt-[9px]"><Scene /></main>
        <div className="flex w-[31px] shrink-0 items-center pt-[2px] pl-[15px]">
          <svg viewBox="0 0 4 8" className="h-2 w-1"><path d="M0 0v8L4 4z" fill="#444" /></svg>
          <span className="ml-2 h-4 border-l border-dotted border-[#aaa]" />
        </div>

        <aside className="flex w-[271px] shrink-0 flex-col">
          <div className="flex h-[22px] shrink-0 items-center justify-between bg-[#b8b8b8] pr-[3px] pl-1">
            <div className="flex items-center gap-1.5">
              <svg viewBox="0 0 16 16" className="size-4"><path d="M0 4 5 7V9L0 12zM7 4h7l2 2v4l-2 2H7L5 10V6z" fill="#444" /></svg>
              <Fit w={39.5} className="text-[#222]">Views</Fit>
            </div>
            <CloseButton />
          </div>
          <div className="flex h-[38px] shrink-0 items-center pl-0.5">
            <Fit w={36}>Type:</Fit>
            <div className="ml-1.5 flex h-[25px] w-[138px] items-center justify-between rounded-[3px] border border-[#a9a9a9] bg-linear-to-b from-white to-[#efefef] pr-[7px] pl-1">
              <span className="h-[19px] w-[111px] overflow-hidden"><Fit w={114}>Orbit (rviz_defau</Fit></span>
              <svg viewBox="0 0 8 4" className="h-1 w-2"><path d="M0 0h8L4 4z" fill="#555" /></svg>
            </div>
            <Button label="Zero" w={31} className="ml-1.5 h-[25px] w-20" />
          </div>
          <div className="flex h-[833px] shrink-0 flex-col border border-[#b4b4b4] bg-white bg-linear-to-r from-transparent from-[134px] via-[#d6d6d6] via-[134px] to-transparent to-[135px] pt-px">
            <div className="flex h-[17px] items-center font-bold">
              <div className="flex w-[135px] items-center pl-[3px]"><ArrowDown /><Fit w={93} className="ml-1">Current View</Fit></div>
              <Fit w={127} className="ml-0.5">Orbit (rviz_defa…</Fit>
            </div>
            {viewRows.map((r, i) => (
              <div key={i} className="flex h-[17px] items-center">
                <div className="flex w-[135px] items-center pl-[23px]">
                  <span className="flex h-4 w-5 shrink-0">{r.arrow && <ArrowRight />}</span>
                  <Fit w={r.w}>{r.t}</Fit>
                </div>
                <div className="pl-0.5">
                  {r.v ? <Fit w={r.vw ?? 0}>{r.v}</Fit> : <Check on={!!r.box} />}
                </div>
              </div>
            ))}
          </div>
          <div className="mt-1.5 flex gap-1.5 pl-0.5">
            <Button label="Save" w={30} className="h-[25px] w-[85px]" />
            <Button label="Remove" w={54} className="h-[25px] w-[85px]" />
            <Button label="Rename" w={55} className="h-[25px] w-[85px]" />
          </div>
        </aside>
      </div>

      <footer className="flex flex-1 items-center pb-px pl-0.5">
        <Button label="Reset" w={38} className="mt-[5px] h-[24px] w-[53px]" />
        <div className="ml-1.5 flex gap-[3px] pt-1">
          {hints.map((h) => (
            <span key={h.b} className="flex gap-[3px]"><Fit w={h.bw} className="font-bold">{h.b}</Fit><Fit w={h.tw}>{h.t}</Fit></span>
          ))}
        </div>
        <div className="ml-auto pr-px pb-[3px]"><Fit w={40}>31 fps</Fit></div>
      </footer>
    </div>
  );
}
